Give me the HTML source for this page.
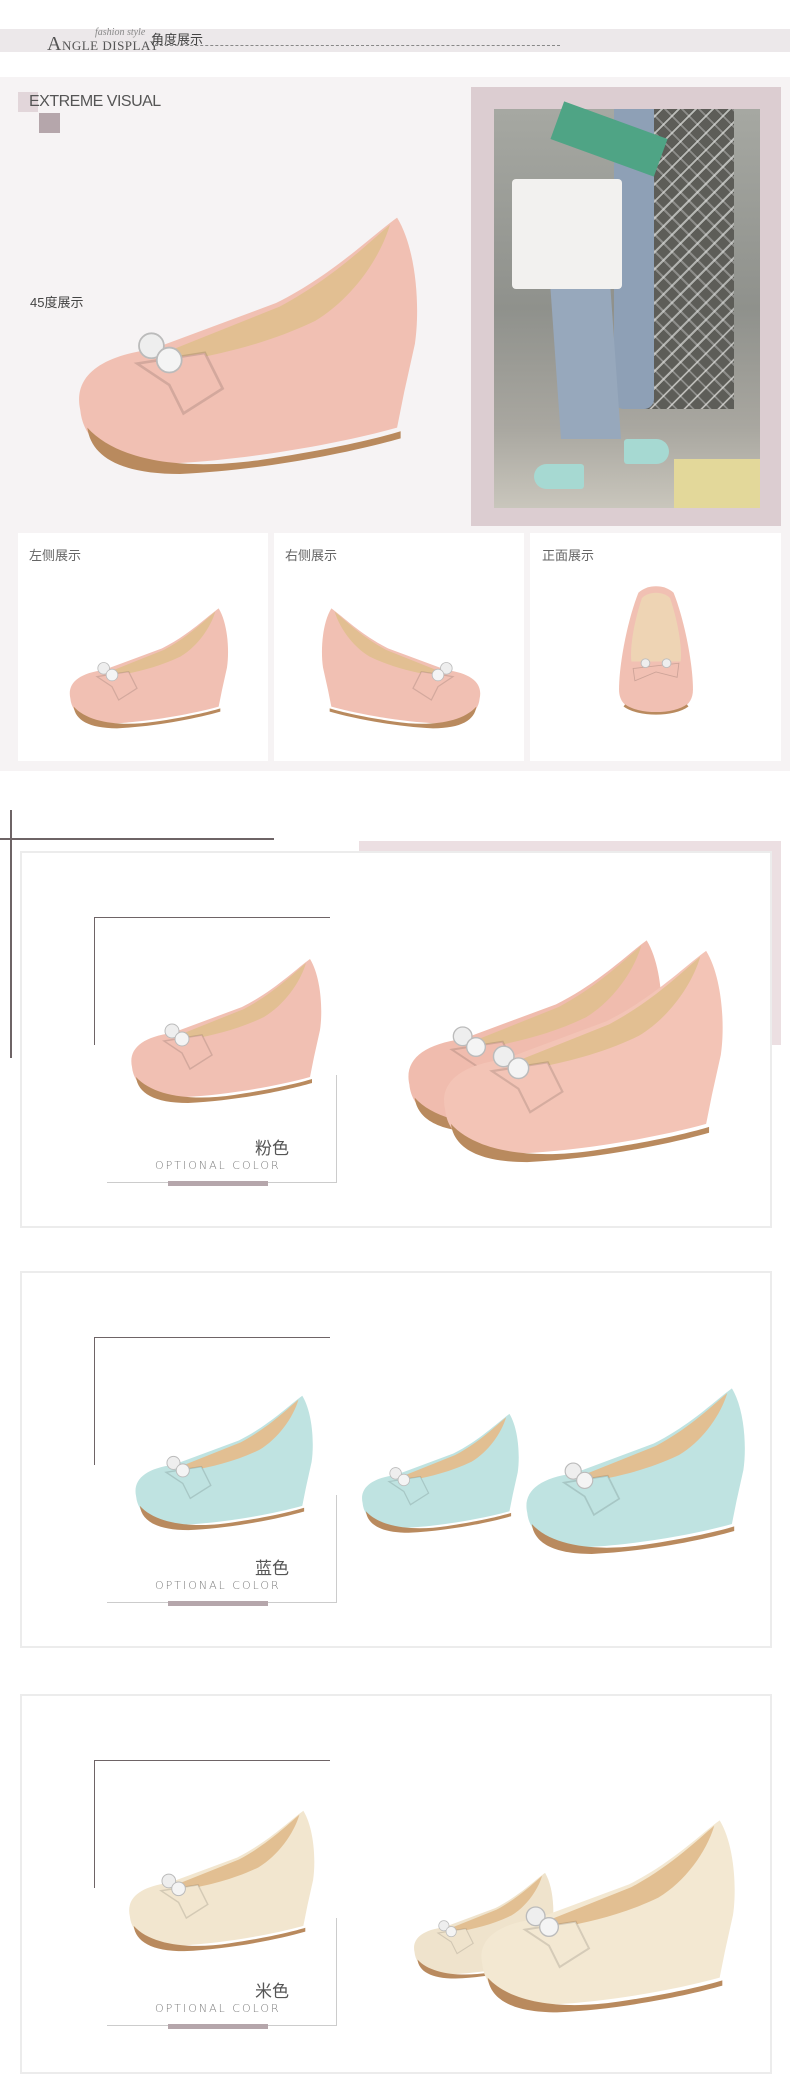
<!DOCTYPE html>
<html><head><meta charset="utf-8">
<style>
*{margin:0;padding:0;box-sizing:border-box}
body{width:790px;height:2047px;background:#fff;position:relative;overflow:hidden;font-family:"Liberation Sans","Noto Sans CJK SC",sans-serif;color:#555}
.a{position:absolute}
.box{position:absolute;background:#fff;border:2px solid #ececec}
.cn{font-size:15px;color:#666}
.opt{font-family:"DejaVu Sans",sans-serif;font-size:11px;letter-spacing:2px;color:#777;font-weight:300}
svg{position:absolute;overflow:visible}
</style></head><body>
<svg width="0" height="0" style="position:absolute">
<defs>
<symbol id="shoe" viewBox="0 0 200 150">
<path d="M8,112 C4,94 18,82 48,78 L118,52 C150,36 172,14 186,4 C197,22 199,55 196,75 L190,102 L186,122 C150,132 100,140 62,142 C28,142 10,132 8,112 Z" fill="currentColor"/>
<path d="M60,78 L120,54 C150,38 170,18 182,8 C176,28 160,50 140,62 C115,74 90,80 68,84 Z" fill="#e2bf92"/>
<path d="M12,122 C30,142 70,146 110,140 C150,134 175,128 188,124 L188,128 C160,136 110,146 64,148 C30,148 14,138 12,122 Z" fill="#b98a5e"/>
<path d="M40,86 L78,80 L88,100 L66,114 L58,98 Z" fill="currentColor" stroke="rgba(0,0,0,.12)" stroke-width="1.5"/>
<circle cx="48" cy="76" r="7" fill="#eee" stroke="#bbb"/><circle cx="58" cy="84" r="7" fill="#f4f4f4" stroke="#bbb"/>
</symbol>
<symbol id="front" viewBox="0 0 100 150">
<path d="M30,10 C40,0 60,0 70,10 C82,40 92,90 92,120 C92,140 75,146 50,146 C25,146 8,140 8,120 C8,90 18,40 30,10 Z" fill="currentColor"/>
<path d="M34,16 C42,8 58,8 66,16 C74,40 80,70 78,88 L22,88 C20,70 26,40 34,16 Z" fill="#eed4b4"/>
<path d="M24,96 L76,90 L74,106 L50,100 L26,110 Z" fill="currentColor" stroke="rgba(0,0,0,.15)"/>
<circle cx="38" cy="90" r="5" fill="#eee" stroke="#bbb"/><circle cx="62" cy="90" r="5" fill="#eee" stroke="#bbb"/>
<path d="M14,138 C30,150 70,150 86,138" stroke="#b98a5e" stroke-width="3" fill="none"/>
</symbol>
</defs></svg>

<div class="a" style="left:0;top:29px;width:790px;height:23px;background:#ece8ea"></div>
<div class="a" style="left:47px;top:33px;font-family:'Liberation Serif',serif;font-size:13px;color:#555;letter-spacing:0.5px"><span style="font-size:20px">A</span>NGLE DISPLAY</div>
<div class="a" style="left:95px;top:27px;font-family:'Liberation Serif',serif;font-style:italic;font-size:10px;color:#888">fashion style</div>
<div class="a" style="left:151px;top:29px;font-size:13px;color:#444">角度展示</div>
<div class="a" style="left:155px;top:45px;width:405px;border-top:1px dashed #888"></div>

<div class="a" style="left:0;top:77px;width:790px;height:694px;background:#f6f3f4"></div>
<div class="a" style="left:18px;top:92px;width:20px;height:20px;background:#e2d6da"></div>
<div class="a" style="left:39px;top:113px;width:21px;height:20px;background:#b5a6ab"></div>
<div class="a" style="left:29px;top:93px;font-size:16px;color:#555;letter-spacing:-0.5px">EXTREME VISUAL</div>
<div class="a cn" style="left:30px;top:292px;font-size:13px;color:#444">45度展示</div>
<svg style="left:66px;top:210px" width="356" height="268" color="#f1c0b3"><use href="#shoe"/></svg>

<div class="a" style="left:471px;top:87px;width:310px;height:439px;background:#dccdd1"></div>
<div class="a" style="left:494px;top:109px;width:266px;height:399px;background:linear-gradient(180deg,#a6a8a2 0%,#8f918c 50%,#a9a7a0 80%,#c9c6bc 100%)">
 <div class="a" style="left:150px;top:0;width:90px;height:300px;background:repeating-linear-gradient(45deg,transparent 0 10px,rgba(230,230,230,.35) 10px 12px),repeating-linear-gradient(-45deg,#5d5d58 0 10px,rgba(230,230,230,.35) 10px 12px)"></div>
 <div class="a" style="left:120px;top:0;width:40px;height:300px;background:#8ea0b6;border-radius:0 0 10px 10px"></div>
 <div class="a" style="left:60px;top:130px;width:60px;height:200px;background:#97a8bc;transform:skewX(4deg)"></div>
 <div class="a" style="left:18px;top:70px;width:110px;height:110px;background:#f2f1ef;border-radius:4px"></div>
 <div class="a" style="left:60px;top:10px;width:110px;height:40px;background:#4fa485;transform:rotate(20deg)"></div>
 <div class="a" style="left:40px;top:355px;width:50px;height:25px;background:#a6d9d2;border-radius:20px 5px 5px 20px"></div>
 <div class="a" style="left:130px;top:330px;width:45px;height:25px;background:#a6d9d2;border-radius:5px 20px 20px 5px"></div>
 <div class="a" style="left:180px;top:350px;width:86px;height:49px;background:#e3d89a"></div>
</div>

<div class="box" style="left:18px;top:533px;width:250px;height:228px;border:none"></div>
<div class="box" style="left:274px;top:533px;width:250px;height:228px;border:none"></div>
<div class="box" style="left:530px;top:533px;width:251px;height:228px;border:none"></div>
<div class="a cn" style="left:29px;top:545px;font-size:13px">左侧展示</div>
<div class="a cn" style="left:285px;top:545px;font-size:13px">右侧展示</div>
<div class="a cn" style="left:542px;top:545px;font-size:13px">正面展示</div>
<svg style="left:46px;top:605px" width="202" height="125" color="#f1c0b3"><use href="#shoe"/></svg>
<svg style="left:302px;top:605px;transform:scaleX(-1)" width="202" height="125" color="#f1c0b3"><use href="#shoe"/></svg>
<svg style="left:612px;top:575px" width="88" height="150" color="#f1c0b3"><use href="#front"/></svg>

<div class="a" style="left:10px;top:810px;width:2px;height:248px;background:#6e6466"></div>
<div class="a" style="left:0;top:838px;width:274px;height:2px;background:#6e6466"></div>
<div class="a" style="left:359px;top:841px;width:422px;height:204px;background:#ecdfe2"></div>

<div class="box" style="left:20px;top:851px;width:752px;height:377px"></div>
<div class="box" style="left:20px;top:1271px;width:752px;height:377px"></div>
<div class="box" style="left:20px;top:1694px;width:752px;height:380px"></div>

<div class="a" style="left:94px;top:917px;width:236px;height:128px;border-top:1px solid #6e6466;border-left:1px solid #6e6466"></div>
<div class="a" style="left:107px;top:1075px;width:230px;height:108px;border-right:1px solid #ccc;border-bottom:1px solid #ccc"></div>
<div class="a" style="left:168px;top:1181px;width:100px;height:5px;background:#b5a6ab"></div>
<div class="a cn" style="left:255px;top:1134px;font-size:17px;color:#555">粉色</div>
<div class="a opt" style="left:155px;top:1159px">OPTIONAL COLOR</div>

<div class="a" style="left:94px;top:1337px;width:236px;height:128px;border-top:1px solid #6e6466;border-left:1px solid #6e6466"></div>
<div class="a" style="left:107px;top:1495px;width:230px;height:108px;border-right:1px solid #ccc;border-bottom:1px solid #ccc"></div>
<div class="a" style="left:168px;top:1601px;width:100px;height:5px;background:#b5a6ab"></div>
<div class="a cn" style="left:255px;top:1554px;font-size:17px;color:#555">蓝色</div>
<div class="a opt" style="left:155px;top:1579px">OPTIONAL COLOR</div>

<div class="a" style="left:94px;top:1760px;width:236px;height:128px;border-top:1px solid #6e6466;border-left:1px solid #6e6466"></div>
<div class="a" style="left:107px;top:1918px;width:230px;height:108px;border-right:1px solid #ccc;border-bottom:1px solid #ccc"></div>
<div class="a" style="left:168px;top:2024px;width:100px;height:5px;background:#b5a6ab"></div>
<div class="a cn" style="left:255px;top:1977px;font-size:17px;color:#555">米色</div>
<div class="a opt" style="left:155px;top:2002px">OPTIONAL COLOR</div>

<svg style="left:124px;top:955px" width="200" height="150" color="#f1c0b3"><use href="#shoe"/></svg>
<svg style="left:392px;top:935px" width="280" height="200" color="#f0bcae"><use href="#shoe"/></svg>
<svg style="left:430px;top:945px" width="300" height="220" color="#f3c4b6"><use href="#shoe"/></svg>

<svg style="left:122px;top:1392px" width="200" height="140" color="#bfe3e1"><use href="#shoe"/></svg>
<svg style="left:356px;top:1375px" width="165" height="195" color="#bfe3e1"><use href="#shoe"/></svg>
<svg style="left:518px;top:1380px" width="230" height="180" color="#bfe3e1"><use href="#shoe"/></svg>

<svg style="left:122px;top:1805px" width="195" height="150" color="#f2e6cf"><use href="#shoe"/></svg>
<svg style="left:362px;top:1870px" width="240" height="110" color="#efe3cc"><use href="#shoe"/></svg>
<svg style="left:465px;top:1815px" width="280" height="200" color="#f3e8d2"><use href="#shoe"/></svg>
</body></html>
